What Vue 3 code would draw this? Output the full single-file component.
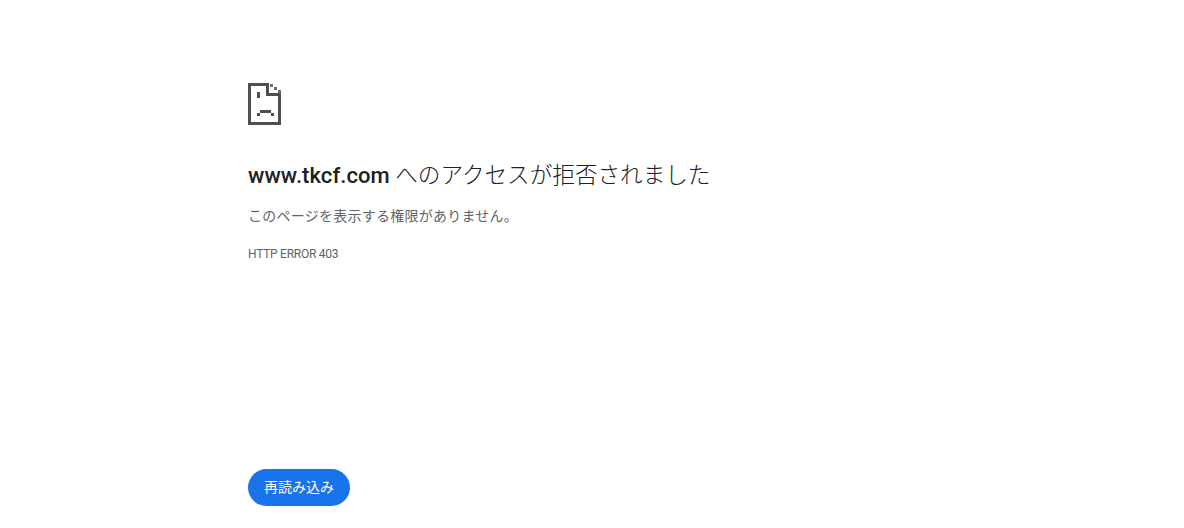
<template>
  <main class="error-page">
    <svg class="sad-icon" width="33" height="42" viewBox="0 0 33 42" shape-rendering="crispEdges" aria-hidden="true">
      <path fill="#4f4f4f" d="M0 0H21V10H33V42H0ZM3 3V39H30V13H18V3Z" fill-rule="evenodd" />
      <path fill="#6e6e6e" d="M22 1H25V4H22ZM26 4H29V7H26ZM30 7H33V10H30Z" />
      <rect x="9" y="9" width="3" height="6" fill="#4f4f4f" />
      <rect x="12" y="27" width="11" height="3" fill="#4f4f4f" />
      <rect x="9" y="30" width="3" height="3" fill="#4f4f4f" />
      <rect x="23" y="30" width="3" height="3" fill="#4f4f4f" />
    </svg>
    <h1 class="title"><span class="domain">www.tkcf.com</span> <span class="jp">へのアクセスが拒否されました</span></h1>
    <p class="message">このページを表示する権限がありません。</p>
    <p class="code">HTTP ERROR 403</p>
    <button class="reload" type="button"><span class="reload-label">再読み込み</span></button>
  </main>
</template>

<script setup>
</script>

<style>
html,
body {
  background: #fff;
}
</style>

<style scoped>
.error-page {
  box-sizing: border-box;
  height: 528px;
  padding: 83px 0 22px 248px;
  display: flex;
  flex-direction: column;
  align-items: flex-start;
  font-family: Roboto, "Noto Sans CJK JP", sans-serif;
}

.sad-icon {
  display: block;
}

.title {
  margin: 32px 0 0;
  font-size: 22px;
  line-height: 33px;
  font-weight: 400;
  color: #202124;
  white-space: nowrap;
}

.domain {
  font-weight: 500;
  letter-spacing: 0.08px;
}

.jp {
  font-family: "Noto Sans CJK JP", sans-serif;
  font-size: 22.6px;
  font-weight: 300;
}

.message {
  margin: 13px 0 0;
  font-family: "Noto Sans CJK JP", sans-serif;
  font-size: 14px;
  letter-spacing: 0.25px;
  line-height: 20px;
  font-weight: 400;
  color: #5f6368;
}

.code {
  margin: 20px 0 0;
  font-size: 12px;
  letter-spacing: -0.25px;
  line-height: 18px;
  color: #5f6368;
}

.reload {
  margin-top: auto;
  height: 37px;
  width: 102px;
  padding: 0;
  border: none;
  border-radius: 19px;
  background: #1a73e8;
  color: #fff;
  font-family: inherit;
  font-size: 14px;
  font-weight: 400;
}

.reload-label {
  display: block;
  margin-top: -3px;
}
</style>
